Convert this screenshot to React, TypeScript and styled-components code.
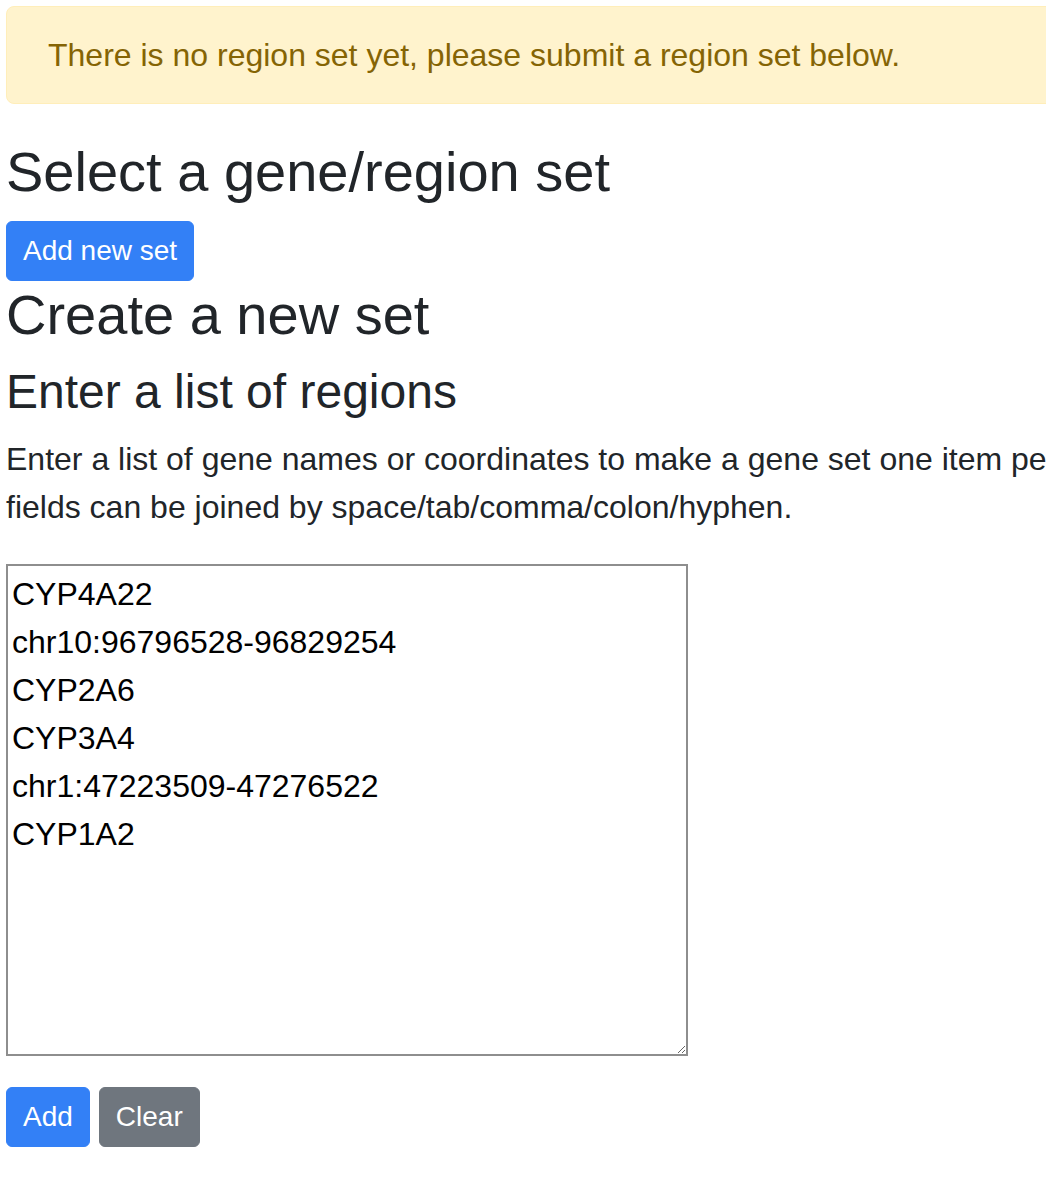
import { useState } from "react";
import styled, { createGlobalStyle } from "styled-components";

const GlobalStyle = createGlobalStyle`
  html, body {
    margin: 0;
    overflow: hidden;
    background: #fff;
  }
  body {
    font-family: "Liberation Sans", Arial, Helvetica, sans-serif;
    font-size: 32px;
    line-height: 48px;
    color: #212529;
  }
`;

const Page = styled.div`
  width: 1500px;
  padding: 6px 0 0 6px;
`;

const Alert = styled.div`
  background-color: #fff3cd;
  border: 1px solid #ffeeba;
  border-radius: 8px;
  color: #856404;
  padding: 24px 41px;
  margin-bottom: 34px;
`;

const Heading = styled.h3`
  font-size: 56px;
  font-weight: 400;
  line-height: 67px;
  margin: 0 0 16px;
`;

const SubHeading = styled.h4`
  font-size: 48px;
  font-weight: 400;
  line-height: 55px;
  margin: 0 0 16px;
`;

const Text = styled.p`
  margin: 0 0 33px;
  white-space: nowrap;
`;

const Button = styled.button<{ $variant?: "primary" | "secondary" }>`
  font-family: inherit;
  font-size: 28px;
  line-height: 42px;
  padding: 8px 16px;
  border: 1px solid ${(p) => (p.$variant === "secondary" ? "#6f767e" : "#3380f6")};
  background-color: ${(p) => (p.$variant === "secondary" ? "#6f767e" : "#3380f6")};
  color: #fff;
  border-radius: 6px;
  cursor: pointer;
`;

const SetBar = styled.div`
  display: flex;
`;

const Regions = styled.textarea`
  display: block;
  width: 682px;
  height: 492px;
  box-sizing: border-box;
  margin: 0 0 31px;
  padding: 4px;
  border: 2px solid #8e8e8e;
  font-family: inherit;
  font-size: 32px;
  line-height: 48px;
  color: #000;
  resize: both;
  outline: none;
`;

const Actions = styled.div`
  display: flex;
  gap: 9px;
`;

const initial = [
  "CYP4A22",
  "chr10:96796528-96829254",
  "CYP2A6",
  "CYP3A4",
  "chr1:47223509-47276522",
  "CYP1A2",
].join("\n");

const App = () => {
  const [regions, setRegions] = useState(initial);

  return (
    <Page>
      <GlobalStyle />
      <Alert>There is no region set yet, please submit a region set below.</Alert>
      <Heading>Select a gene/region set</Heading>
      <SetBar>
        <Button>Add new set</Button>
      </SetBar>
      <Heading>Create a new set</Heading>
      <SubHeading>Enter a list of regions</SubHeading>
      <Text>
        Enter a list of gene names or coordinates to make a gene set one item per line. Coordinate
        <br />
        fields can be joined by space/tab/comma/colon/hyphen.
      </Text>
      <Regions
        value={regions}
        onChange={(e) => {
          setRegions(e.target.value);
        }}
      />
      <Actions>
        <Button>Add</Button>
        <Button $variant="secondary" onClick={() => setRegions("")}>
          Clear
        </Button>
      </Actions>
    </Page>
  );
};

export default App;
